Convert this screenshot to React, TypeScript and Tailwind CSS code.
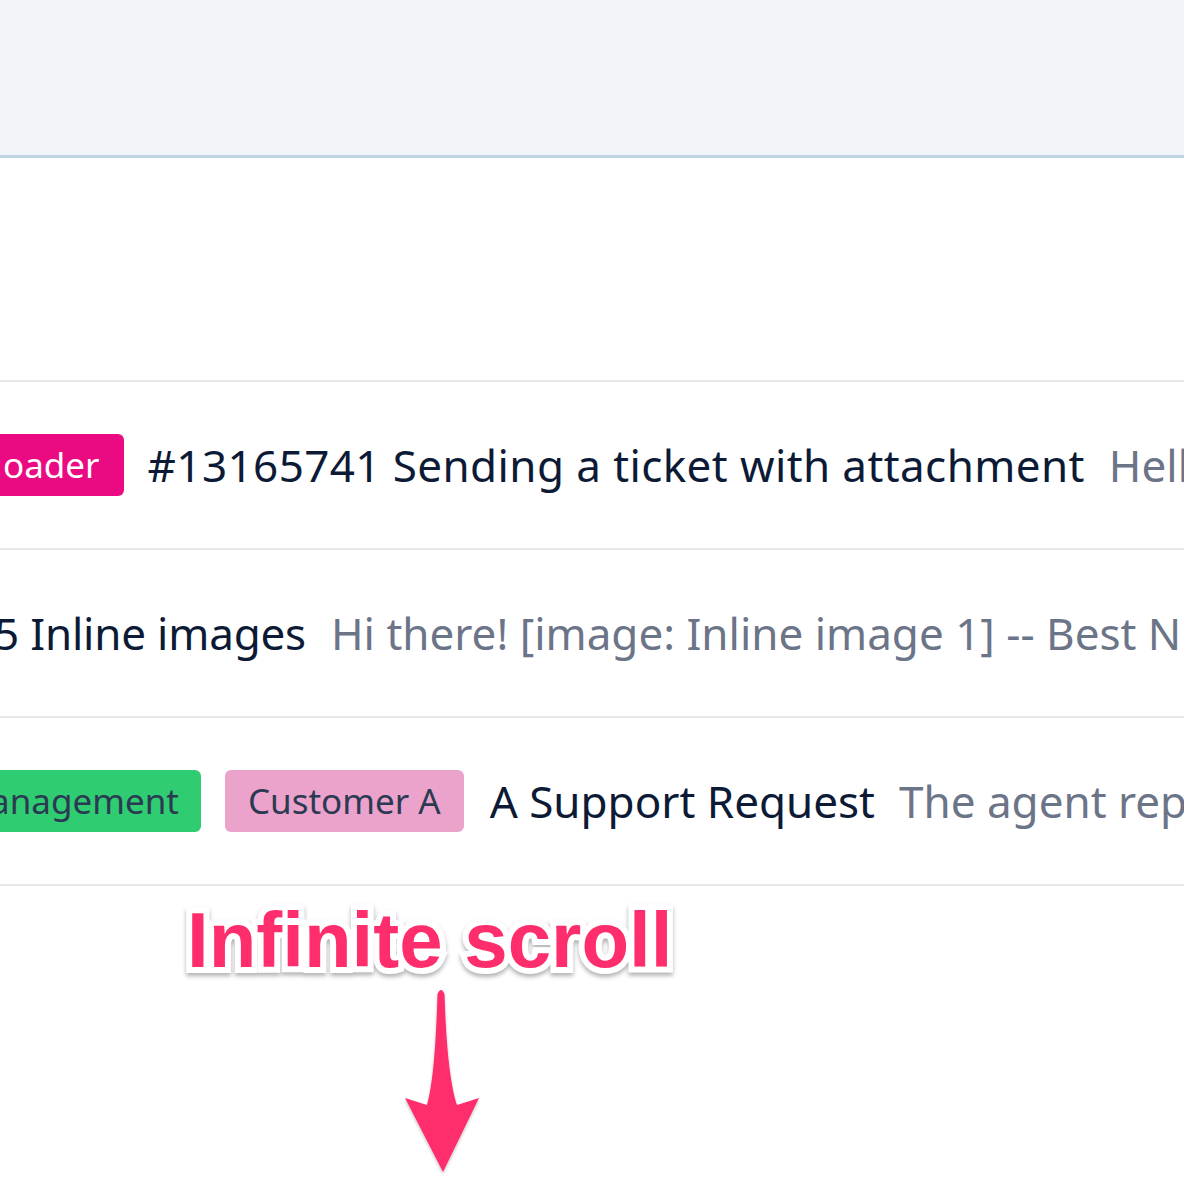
import React from "react";

function Arrow() {
  return (
    <svg width="90" height="195" viewBox="0 0 90 195" className="block">
      <defs>
        <filter id="sh" x="-20%" y="-10%" width="140%" height="130%">
          <feDropShadow dx="0" dy="2" stdDeviation="1.5" floodColor="#000" floodOpacity="0.25" />
        </filter>
      </defs>
      <path
        d="M37.5,10 Q41,2 44.5,10 C46,60 50,100 57,121 L79,114 L43,188 L5,114 L27,121 C33,100 36,60 37.5,10 Z"
        fill="#fe2d6c"
        filter="url(#sh)"
      />
    </svg>
  );
}

export default function App() {
  return (
    <div className="w-[1184px] h-[1184px] bg-white overflow-hidden font-['Noto_Sans',sans-serif]">
      <div className="h-[158px] bg-[#f1f4f8] border-b-[3px] border-[#bfd5e1]" />
      <div className="h-[222px]" />
      <div className="border-t-2 border-[#e7e8eb]">
        <div className="h-[168px] border-b-2 border-[#e7e8eb] flex items-center gap-[24px] whitespace-nowrap overflow-hidden">
          <span className="h-[62px] flex items-center pr-[24px] rounded-r-[6px] bg-[#ea0a82] text-white text-[35px] shrink-0 overflow-hidden">
            <span className="ml-[3px]">oader</span>
          </span>
          <span className="text-[44px] text-[#0d1a36] tracking-[0.4px] shrink-0">#13165741 Sending a ticket with attachment</span>
          <span className="text-[44px] text-[#6c7488] shrink-0">Hello</span>
        </div>
        <div className="h-[168px] border-b-2 border-[#e7e8eb] flex items-center gap-[25px] whitespace-nowrap overflow-hidden">
          <span className="text-[44px] text-[#0d1a36] shrink-0 ml-[-6px] tracking-[-0.2px]">5 Inline images</span>
          <span className="text-[44px] text-[#6c7488] shrink-0">Hi there! [image: Inline image 1] -- Best Nicole</span>
        </div>
        <div className="h-[168px] border-b-2 border-[#e7e8eb] flex items-center gap-[24px] whitespace-nowrap overflow-hidden">
          <span className="h-[62px] flex items-center pr-[22px] rounded-r-[6px] bg-[#2fcc71] text-[#2b3a52] text-[35px] shrink-0 overflow-hidden">
            <span className="ml-[-10px]">anagement</span>
          </span>
          <span className="h-[62px] flex items-center px-[23px] rounded-[6px] bg-[#eba2cb] text-[#2b3a52] text-[35px] shrink-0">
            Customer A
          </span>
          <span className="text-[44px] text-[#0d1a36] shrink-0 ml-[2px]">A Support Request</span>
          <span className="text-[44px] text-[#6c7488] shrink-0">The agent replied</span>
        </div>
      </div>
      <div className="pl-[181px] pt-[15px]">
        <div className="inline-block [filter:drop-shadow(0_3px_2px_rgba(0,0,0,0.3))]">
          <span className="font-['Liberation_Sans',Arial,sans-serif] font-bold text-[78px] leading-none text-[#fe2d6c] [-webkit-text-stroke:12px_white] [paint-order:stroke_fill] px-[6px]">
            Infinite scroll
          </span>
        </div>
      </div>
      <div className="pl-[400px] pt-[5px]">
        <Arrow />
      </div>
    </div>
  );
}
